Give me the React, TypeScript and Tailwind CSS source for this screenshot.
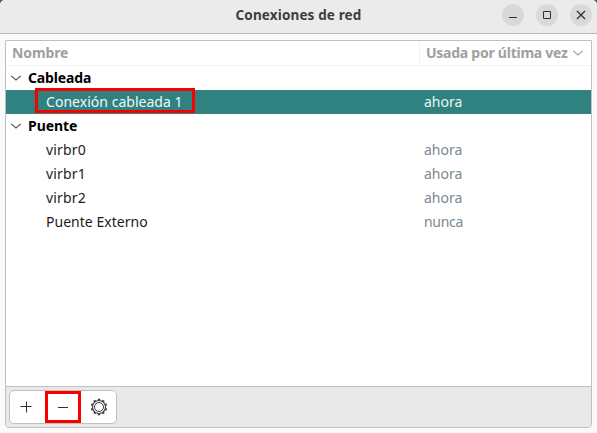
import React from "react";

const Chevron = ({ className }: { className: string }) => (
  <svg viewBox="0 0 12 8" fill="none" stroke="currentColor" strokeWidth="1.1" className={`h-2 w-3 shrink-0 ${className}`}>
    <path d="M1.2 1.8 L6 6 L10.8 1.8" />
  </svg>
);

const WindowButton = ({ children, label }: { children: React.ReactNode; label: string }) => (
  <button aria-label={label} className="grid size-[22px] place-items-center rounded-full bg-[#d9d9d9] text-[#303030]">
    <svg viewBox="0 0 22 22" fill="none" stroke="currentColor" className="size-[22px]">
      {children}
    </svg>
  </button>
);

const Group = ({ name, className }: { name: string; className: string }) => (
  <div className="flex h-6 items-center pl-1 font-bold text-black">
    <Chevron className="text-[#555]" />
    <span className={`ml-1.5 ${className}`}>{name}</span>
  </div>
);

type RowProps = { name: string; used: string; nameClass: string; usedClass: string; selected?: boolean };

const Row = ({ name, used, nameClass, usedClass, selected }: RowProps) => (
  <div className={`flex h-6 items-center ${selected ? "bg-[#308280] text-[#f0f8f8]" : "text-[#1c1c1c]"}`}>
    <div className="relative w-[418px] pl-10">
      <span className={nameClass}>{name}</span>
      {selected && <div className="absolute -top-0.5 left-[29px] h-[25px] w-[160px] border-[3px] border-[#f80000]" />}
    </div>
    <span className={`${usedClass} ${selected ? "text-[#eaf5f4]" : "text-[#7d8790]"}`}>{used}</span>
  </div>
);

const TEETH = [0, 36, 72, 108, 144, 180, 216, 252, 288, 324];

const Gear = () => (
  <svg viewBox="0 0 18 18" fill="none" stroke="#3a3a3a" className="size-[18px]">
    <circle cx="9" cy="9" r="6.5" strokeWidth="1.1" />
    <circle cx="9" cy="9" r="4.5" strokeWidth="1" />
    {TEETH.map((a) => (
      <path key={a} d="M7.8 1.6h2.4" strokeWidth="1.5" transform={`rotate(${a} 9 9)`} />
    ))}
  </svg>
);

export default function App() {
  return (
    <div className="h-[433px] w-[597px] overflow-hidden bg-[#355f7d] font-['Noto_Sans',sans-serif] text-[14px] leading-6">
      <div className="flex h-full flex-col overflow-hidden rounded-t-[5px] bg-[#fafafa]">
        <header className="grid h-[34px] shrink-0 grid-cols-[1fr_auto_1fr] items-center border-b border-[#b9b9b9] bg-[#ebebeb] pr-[5px] pb-[3px]">
          <div />
          <h1 className="pl-[5px] text-[13.5px] font-bold tracking-[0.14px] whitespace-nowrap text-[#3d3d3d]">Conexiones de red</h1>
          <div className="flex justify-end gap-3">
            <WindowButton label="Minimizar">
              <path d="M7 13.5h8" />
            </WindowButton>
            <WindowButton label="Maximizar">
              <path d="M7.5 7.5h7v7h-7z" />
            </WindowButton>
            <WindowButton label="Cerrar">
              <path d="M7 7l8 8M15 7l-8 8" strokeWidth="1.3" />
            </WindowButton>
          </div>
        </header>
        <main className="mx-[5px] mt-1.5 mb-[5px] flex flex-1 flex-col overflow-hidden rounded-b-[4px] border border-[#c0c0c0] bg-white">
          <div className="flex h-[25px] shrink-0 border-b border-[#f3f3f3] font-bold text-[#9f9f9f]">
            <div className="w-[414px] border-r border-[#f3f3f3] pl-1.5">
              <span className="tracking-[-0.1px]">Nombre</span>
            </div>
            <div className="flex flex-1 items-center pl-1.5 whitespace-nowrap">
              <span className="tracking-[-0.25px]">Usada por última vez</span>
              <Chevron className="ml-1" />
            </div>
          </div>
          <Group name="Cableada" className="tracking-[-0.15px]" />
          <Row selected name="Conexión cableada 1" used="ahora" nameClass="tracking-[0.03px]" usedClass="tracking-[0px]" />
          <Group name="Puente" className="tracking-[-0.05px]" />
          <Row name="virbr0" used="ahora" nameClass="tracking-[0.15px]" usedClass="tracking-[0px]" />
          <Row name="virbr1" used="ahora" nameClass="tracking-[0.15px]" usedClass="tracking-[0px]" />
          <Row name="virbr2" used="ahora" nameClass="tracking-[0.15px]" usedClass="tracking-[0px]" />
          <Row name="Puente Externo" used="nunca" nameClass="tracking-[0.03px]" usedClass="tracking-[-0.3px]" />
          <footer className="mt-auto h-[41px] shrink-0 border-t border-[#c0c0c0] bg-[#e9e9e9] pt-[3px] pl-[3px]">
            <div className="flex h-[34px] w-[108px] rounded-[5px] border border-[#c0c0c0] bg-white">
              <button aria-label="Añadir" className="grid w-[35px] place-items-center pr-[3px]">
                <svg viewBox="0 0 12 12" stroke="#303030" className="size-3">
                  <path d="M.5 5.5h11M6.5 .5v11" />
                </svg>
              </button>
              <button aria-label="Quitar" className="grid w-9 place-items-center border-[3px] border-[#f80000]">
                <svg viewBox="0 0 12 12" stroke="#303030" className="size-3">
                  <path d="M1 6.5h10" />
                </svg>
              </button>
              <button aria-label="Configurar" className="grid flex-1 place-items-center pl-px">
                <Gear />
              </button>
            </div>
          </footer>
        </main>
      </div>
    </div>
  );
}
